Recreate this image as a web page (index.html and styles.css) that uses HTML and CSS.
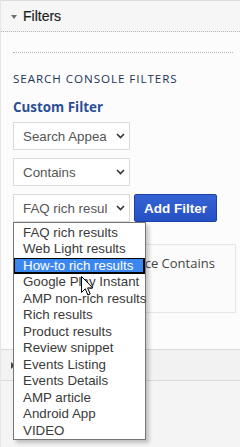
FILE: index.html
```html
<!DOCTYPE html>
<html>
<head>
<meta charset="utf-8">
<link rel="stylesheet" href="styles.css">
</head>
<body>
<div class="topline"></div>
<div class="header">
  <svg class="caret" width="6" height="4" viewBox="0 0 6 4"><path d="M0 0H6L3 4Z" fill="#6f6f6f"/></svg>
  <span class="header-title">Filters</span>
</div>
<div class="panel">
  <div class="sep"></div>
  <div class="section-title">SEARCH CONSOLE FILTERS</div>
  <div class="custom-title">Custom Filter</div>
  <div class="fake-select"><span>Search Appea</span><svg class="chev" width="9" height="6" viewBox="0 0 9 6"><path d="M1 1L4.5 4.5L8 1" fill="none" stroke="#333" stroke-width="1.6"/></svg></div>
  <div class="fake-select"><span>Contains</span><svg class="chev" width="9" height="6" viewBox="0 0 9 6"><path d="M1 1L4.5 4.5L8 1" fill="none" stroke="#333" stroke-width="1.6"/></svg></div>
  <div class="row">
    <div class="fake-select"><span>FAQ rich resul</span><svg class="chev" width="9" height="6" viewBox="0 0 9 6"><path d="M1 1L4.5 4.5L8 1" fill="none" stroke="#333" stroke-width="1.6"/></svg></div>
    <button class="add-btn">Add Filter</button>
  </div>
  <div class="card"><span class="card-text">Search Appearance Contains</span></div>
</div>
<div class="collapsed">
  <svg class="caret-right" width="4" height="7" viewBox="0 0 4 7"><path d="M0 0L4 3.5L0 7Z" fill="#444"/></svg>
</div>
<div class="bottom"></div>

<ul class="dropdown">
  <li>FAQ rich results</li>
  <li>Web Light results</li>
  <li class="active">How-to rich results</li>
  <li>Google Play Instant</li>
  <li>AMP non-rich results</li>
  <li>Rich results</li>
  <li>Product results</li>
  <li>Review snippet</li>
  <li>Events Listing</li>
  <li>Events Details</li>
  <li>AMP article</li>
  <li>Android App</li>
  <li>VIDEO</li>
</ul>
<svg class="cursor" width="13" height="21" viewBox="0 0 13 21"><path d="M0.5 0.5V16.5L4.3 12.8L6.9 19L9.2 18L6.6 11.9H11.8Z" fill="#fff" stroke="#000" stroke-width="1" stroke-linejoin="miter"/></svg>
</body>
</html>
```
FILE: styles.css
```css
html, body {
  margin: 0;
  padding: 0;
}
body {
  width: 240px;
  height: 447px;
  overflow: hidden;
  position: relative;
  background: #f3f3f3;
  font-family: "Liberation Sans", Arial, sans-serif;
  border-left: 1px solid #e6e6e6;
  box-sizing: border-box;
}
.topline {
  height: 1px;
  background: #dcdcdc;
}
.header {
  height: 30px;
  background: #f6f6f6;
  border-bottom: 1px dotted #b5b5b5;
  display: flex;
  align-items: center;
  padding-left: 10px;
}
.caret {
  margin-right: 6px;
  margin-top: 1px;
}
.header-title {
  font-size: 14px;
  color: #1e1e1e;
  -webkit-text-stroke: 0.2px #1e1e1e;
}
.panel {
  background: #fcfcfc;
  padding: 0 7px 36px 12px;
  border-bottom: 1px solid #dadada;
}
.sep {
  padding-top: 20px;
  border-bottom: 1px dotted #b5b5b5;
}
.section-title {
  margin-top: 18px;
  font-family: "Open Sans", sans-serif;
  font-size: 11.6px;
  line-height: 16px;
  color: #1c3657;
  letter-spacing: 0.95px;
  white-space: nowrap;
}
.custom-title {
  margin-top: 12px;
  font-family: "Open Sans", sans-serif;
  font-weight: bold;
  font-size: 13.4px;
  line-height: 16px;
  color: #2b4f96;
}
.fake-select {
  box-sizing: border-box;
  width: 117px;
  height: 28px;
  margin-top: 7px;
  background: #fff;
  border: 1px solid #dcdcdc;
  display: flex;
  align-items: center;
  justify-content: space-between;
  padding: 0 4px 0 9px;
  font-size: 13.33px;
  color: #555;
  white-space: nowrap;
}
.fake-select + .fake-select {
  margin-top: 8px;
}
.row {
  display: flex;
  align-items: flex-start;
  margin-top: 8px;
}
.row .fake-select {
  margin-top: 0;
}
.add-btn {
  margin-left: 4px;
  width: 83px;
  height: 28px;
  border: 1px solid #1e40a4;
  border-radius: 2px;
  background: linear-gradient(#3563d4, #2550c3);
  color: #fff;
  font-family: "Liberation Sans", Arial, sans-serif;
  font-weight: bold;
  font-size: 13.5px;
  padding: 0;
}
.card {
  margin-top: 22px;
  margin-right: -3px;
  height: 69px;
  box-sizing: border-box;
  border: 1px solid #e6e6e6;
  background: #fbfbfb;
  padding: 9px 0 0 27px;
  font-family: "Open Sans", sans-serif;
  font-size: 13px;
  color: #444;
  white-space: nowrap;
  overflow: hidden;
}
.collapsed {
  height: 30px;
  background: #f2f2f2;
  border-bottom: 1px solid #dadada;
  display: flex;
  align-items: center;
  padding-left: 10px;
}
.bottom {
  height: 70px;
  background: #f4f4f4;
}
.dropdown {
  position: absolute;
  left: 12px;
  top: 222px;
  width: 133px;
  height: 218px;
  box-sizing: border-box;
  margin: 0;
  padding: 1.5px 0 0 0;
  list-style: none;
  background: #fff;
  border: 1px solid #767676;
  box-shadow: 3px 3px 4px rgba(0, 0, 0, 0.22);
}
.dropdown li {
  height: 16.5px;
  line-height: 16.5px;
  padding-left: 9px;
  font-size: 13.33px;
  color: #3a3a3a;
  white-space: nowrap;
}
.dropdown li.active {
  background: #3b87f0;
  color: #fff;
  box-shadow: inset 1px 1px 0 #000, inset -2px -2px 0 #000;
}
.cursor {
  position: absolute;
  left: 80px;
  top: 276px;
}
```
